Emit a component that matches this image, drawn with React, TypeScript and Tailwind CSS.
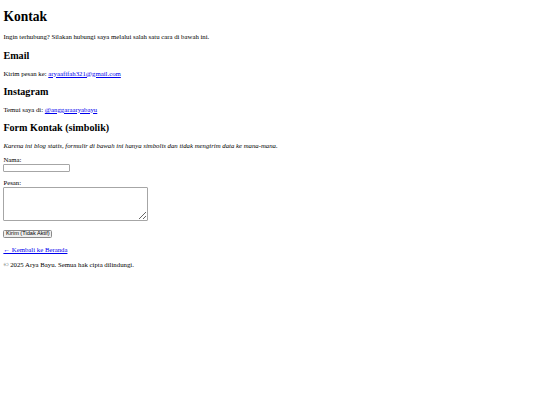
export default function App() {
  return (
    <div className="bg-white min-h-[405px] px-[3.38px] pt-[0.1px] text-black text-[6.77px] leading-[1.149]" style={{ fontFamily: '"Liberation Serif", "Times New Roman", serif' }}>
      <h1 className="text-[13.54px] font-bold mt-[9.07px] mb-[8.6px]">Kontak</h1>
      <p className="my-[6.77px]">Ingin terhubung? Silakan hubungi saya melalui salah satu cara di bawah ini.</p>
      <h2 className="text-[10.15px] font-bold my-[8.43px]">Email</h2>
      <p className="my-[6.77px]">Kirim pesan ke: <a href="#" className="text-[#0000ee] underline">aryaafifah321@gmail.com</a></p>
      <h2 className="text-[10.15px] font-bold my-[8.43px]">Instagram</h2>
      <p className="my-[6.77px]">Temui saya di: <a href="#" className="text-[#0000ee] underline">@anggaraaryabayu</a></p>
      <h2 className="text-[10.15px] font-bold my-[8.2px]">Form Kontak (simbolik)</h2>
      <p className="my-[6.6px] italic">Karena ini blog statis, formulir di bawah ini hanya simbolis dan tidak mengirim data ke mana-mana.</p>
      <form className="flex flex-col items-start">
        <label className="block">Nama:</label>
        <input type="text" className="block mt-0 h-[8.5px] w-[67px] border border-[#a6a6a6] rounded-[1px] bg-white p-0" />
        <label className="block mt-[6.6px]">Pesan:</label>
        <textarea className="block mt-[0.3px] h-[34px] w-[145px] border border-[#a6a6a6] rounded-[1px] bg-white p-0 resize" />
        <button type="button" className="block mt-[8.7px] h-[8.6px] w-[49px] border border-[#8a8a8a] rounded-[1.5px] bg-[#efefef] text-[5.6px] leading-none text-black p-0" style={{ fontFamily: '"Liberation Sans", Arial, sans-serif' }}>Kirim (Tidak Aktif)</button>
      </form>
      <p className="my-[7.4px]"><a href="#" className="text-[#0000ee] underline">← Kembali ke Beranda</a></p>
      <p className="my-[7px]">© 2025 Arya Bayu. Semua hak cipta dilindungi.</p>
    </div>
  );
}
